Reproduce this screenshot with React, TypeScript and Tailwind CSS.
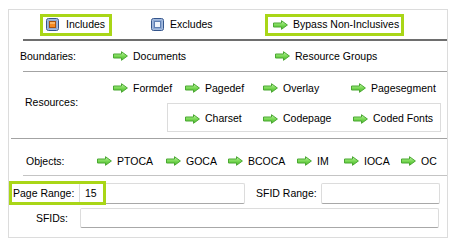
import React from "react";

const Arrow = () => (
  <svg width="15" height="10" viewBox="0 0 15 10" className="shrink-0">
    <defs>
      <linearGradient id="ag" x1="0" y1="0" x2="0" y2="1">
        <stop offset="0" stopColor="#c4f5ab" />
        <stop offset="0.5" stopColor="#7ad955" />
        <stop offset="1" stopColor="#48b528" />
      </linearGradient>
    </defs>
    <path
      d="M0.5 3 H8.5 V0.7 L14.4 5 L8.5 9.3 V7 H0.5 Z"
      fill="url(#ag)"
      stroke="#4aa832"
      strokeWidth="1"
      strokeLinejoin="round"
    />
  </svg>
);

const CheckIcon = ({ on }: { on?: boolean }) => (
  <svg width="13" height="13" viewBox="0 0 13 13" className="shrink-0">
    <rect x="0.5" y="0.5" width="12" height="12" rx="2" fill="#b8cce8" stroke="#34558c" />
    <rect x="1.5" y="1.5" width="10" height="10" rx="1" fill="#8faad4" />
    {on ? (
      <>
        <rect x="3.5" y="3.5" width="6" height="6" fill="#f58a22" stroke="#a8520e" />
        <rect x="4" y="4" width="5" height="2" fill="#fbb566" />
      </>
    ) : (
      <rect x="3.5" y="3.5" width="6" height="6" fill="#eef4fc" stroke="#5f7fb4" />
    )}
  </svg>
);

const Item = ({ label, w }: { label: string; w?: string }) => (
  <div className={`flex items-center gap-[5px] ${w ?? ""}`}>
    <Arrow />
    <span className="whitespace-nowrap">{label}</span>
  </div>
);

const TextBox = ({ w, children }: { w: string; children?: React.ReactNode }) => (
  <div
    className={`${w} h-full bg-white border border-[#dcdcdc] border-b-[#a8a8a8] rounded-[2px] flex items-center pl-[5px]`}
  >
    {children}
  </div>
);

export default function App() {
  return (
    <div
      className="w-[456px] h-[245px] bg-white text-black text-[10.5px] leading-[13px] pt-[9px] pl-[8px]"
      style={{ fontFamily: '"Liberation Sans", Arial, sans-serif' }}
    >
      <div className="w-[440px] h-[229px] border border-[#dcdcdc] flex flex-col">
        {/* Include / exclude row */}
        <div className="h-[29px] flex items-center">
          <div className="ml-[31px] w-[72px] h-[22px] border-[3px] border-[#a9d617] flex items-center pl-[3px] gap-[7px]">
            <CheckIcon on />
            <span>Includes</span>
          </div>
          <div className="ml-[39px] w-[114px] flex items-center gap-[6px]">
            <CheckIcon />
            <span>Excludes</span>
          </div>
          <div className="w-[139px] h-[22px] border-[3px] border-[#a9d617] flex items-center pl-[5px]">
            <Item label="Bypass Non-Inclusives" />
          </div>
        </div>
        <div className="ml-[14px] h-[2px] bg-[#6e6e6e]" />

        {/* Boundaries */}
        <div className="h-[30px] flex items-center">
          <div className="w-[104px] pl-[11px]">Boundaries:</div>
          <Item label="Documents" w="w-[162px]" />
          <Item label="Resource Groups" />
        </div>
        <div className="ml-[14px] h-px bg-[#a3a3a3]" />

        {/* Resources */}
        <div className="h-[66px] flex">
          <div className="w-[104px] pl-[16px] pt-[24px]">Resources:</div>
          <div className="flex flex-col pt-[6px]">
            <div className="h-[20px] flex items-center">
              <Item label="Formdef" w="w-[72px]" />
              <Item label="Pagedef" w="w-[78px]" />
              <Item label="Overlay" w="w-[88px]" />
              <Item label="Pagesegment" />
            </div>
            <div className="ml-[54px] mt-[5px] w-[274px] h-[29px] border border-[#dcdcdc] flex items-center pl-[17px] pt-[2px]">
              <Item label="Charset" w="w-[78px]" />
              <Item label="Codepage" w="w-[90px]" />
              <Item label="Coded Fonts" />
            </div>
          </div>
        </div>
        <div className="ml-[2px] h-px bg-[#a3a3a3]" />

        {/* Objects */}
        <div className="h-[36px] flex items-center pt-[8px]">
          <div className="w-[88px] pl-[17px]">Objects:</div>
          <Item label="PTOCA" w="w-[69px]" />
          <Item label="GOCA" w="w-[62px]" />
          <Item label="BCOCA" w="w-[69px]" />
          <Item label="IM" w="w-[47px]" />
          <Item label="IOCA" w="w-[57px]" />
          <Item label="OC" />
        </div>
        <div className="ml-[14px] h-px bg-[#c4c4c4]" />

        {/* Ranges */}
        <div className="relative mt-[7px] h-[21px] flex items-center">
          <div className="w-[70px] pl-[4px]">Page Range:</div>
          <TextBox w="w-[166px]">15</TextBox>
          <div className="ml-[11px] w-[65px]">SFID Range:</div>
          <TextBox w="w-[119px]" />
          <div className="absolute left-0 -top-[2px] w-[97px] h-[24px] border-[3px] border-[#a9d617]" />
        </div>
        <div className="mt-[4px] h-[20px] flex items-center">
          <div className="w-[71px] pr-[12px] text-right">SFIDs:</div>
          <TextBox w="w-[359px]" />
        </div>
      </div>
    </div>
  );
}
